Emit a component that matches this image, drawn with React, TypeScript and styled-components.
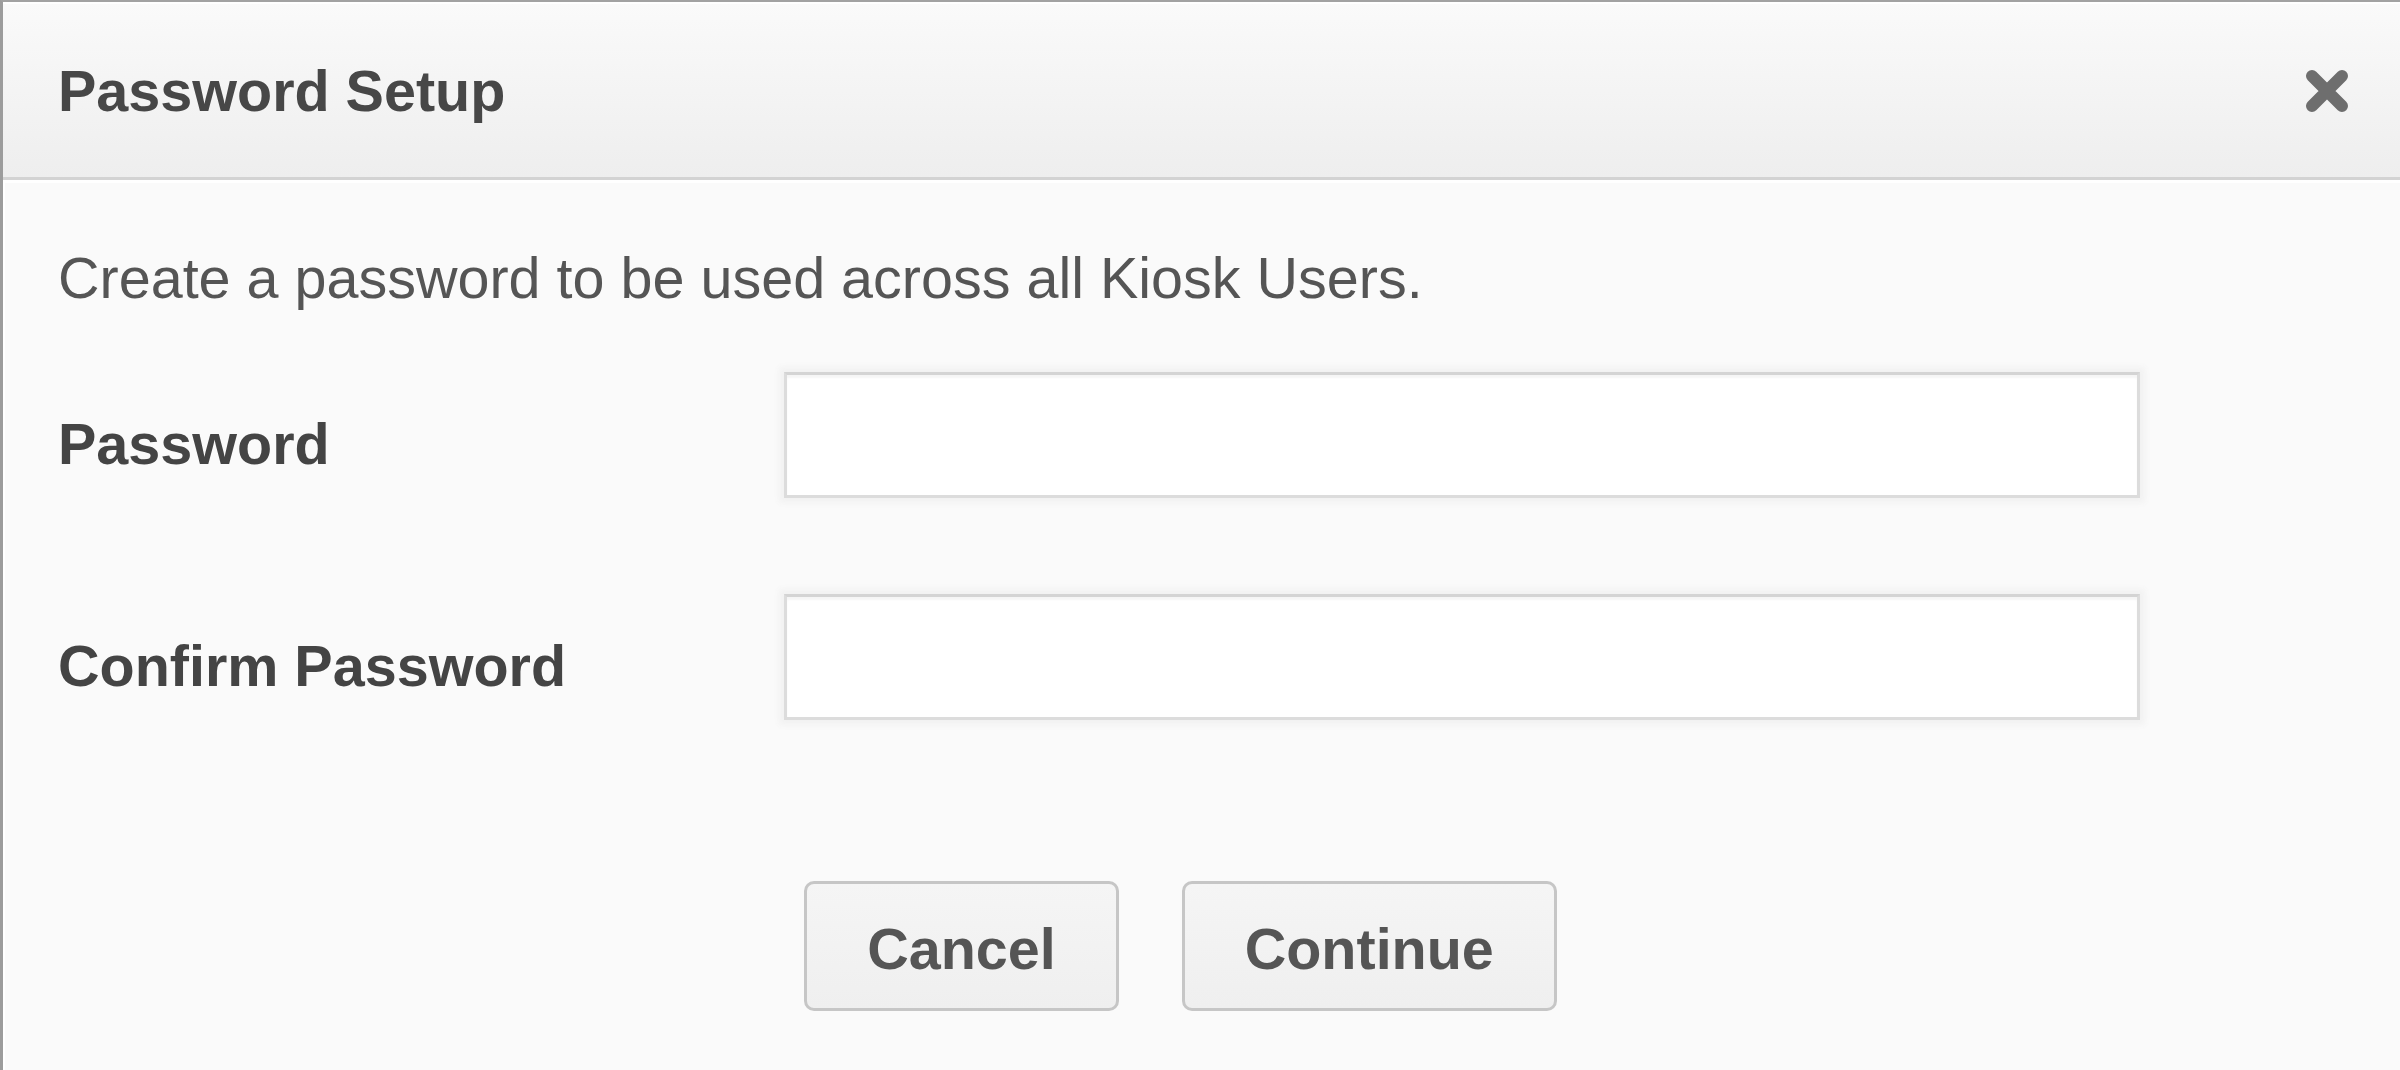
import styled, { createGlobalStyle } from "styled-components";

const GlobalStyle = createGlobalStyle`
  html, body {
    margin: 0;
    padding: 0;
    background: #fafafa;
  }
  body {
    font-family: "Liberation Sans", Arial, sans-serif;
  }
`;

const Dialog = styled.div`
  box-sizing: border-box;
  width: 2400px;
  height: 1070px;
  overflow: hidden;
  background: #fafafa;
  border-top: 2px solid #a2a2a2;
  border-left: 3px solid #9c9c9c;
  box-shadow: inset 2px 2px 0 #ffffff;
`;

const Header = styled.div`
  box-sizing: border-box;
  height: 178px;
  display: flex;
  align-items: center;
  justify-content: space-between;
  padding: 0 48px 0 55px;
  background: linear-gradient(#fafafa, #eeeeee);
  border-top: 2px solid #ffffff;
  border-bottom: 3px solid #d3d3d3;
  box-shadow: 0 3px 0 #ffffff;
`;

const Title = styled.h1`
  margin: 0;
  font-size: 57.5px;
  font-weight: bold;
  color: #474747;
`;

const CloseButton = styled.button`
  border: none;
  background: none;
  padding: 0;
  width: 50px;
  height: 50px;
  display: flex;
  align-items: center;
  justify-content: center;
  cursor: pointer;
`;

const Body = styled.div`
  padding: 65px 0 0 55px;
`;

const Description = styled.p`
  margin: 0 0 61px;
  font-size: 57.5px;
  color: #555555;
`;

const FormRow = styled.div`
  display: grid;
  grid-template-columns: 726px 1356px;
  align-items: center;
  margin-bottom: 96px;
`;

const Label = styled.label`
  padding-top: 18px;
  font-size: 57.5px;
  font-weight: bold;
  color: #444444;
`;

const Input = styled.input`
  box-sizing: border-box;
  width: 100%;
  height: 126px;
  border: 3px solid #dcdcdc;
  border-top-color: #d4d4d4;
  background: #ffffff;
  box-shadow: 0 0 6px 5px #f2f2f2, inset 0 3px 2px rgba(0, 0, 0, 0.04);
  outline: none;
`;

const Actions = styled.div`
  display: flex;
  justify-content: center;
  gap: 63px;
  padding: 65px 42px 0 0;
`;

const Button = styled.button`
  box-sizing: border-box;
  height: 130px;
  padding: 6px 60px 0;
  border: 3px solid #c6c6c6;
  border-radius: 10px;
  background: linear-gradient(#f5f5f5, #efefef);
  font-family: "Liberation Sans", Arial, sans-serif;
  font-size: 57.5px;
  font-weight: bold;
  color: #555555;
  cursor: pointer;
`;

const CloseIcon = () => (
  <svg width="48" height="48" viewBox="0 0 48 48">
    <path
      d="M9 9 L39 39 M39 9 L9 39"
      stroke="#6e6e6e"
      strokeWidth="12"
      strokeLinecap="round"
      fill="none"
    />
  </svg>
);

export default function App() {
  return (
    <>
      <GlobalStyle />
      <Dialog>
        <Header>
          <Title>Password Setup</Title>
          <CloseButton aria-label="Close">
            <CloseIcon />
          </CloseButton>
        </Header>
        <Body>
          <Description>Create a password to be used across all Kiosk Users.</Description>
          <FormRow>
            <Label htmlFor="password">Password</Label>
            <Input id="password" type="password" />
          </FormRow>
          <FormRow>
            <Label htmlFor="confirm">Confirm Password</Label>
            <Input id="confirm" type="password" />
          </FormRow>
        </Body>
        <Actions>
          <Button>Cancel</Button>
          <Button>Continue</Button>
        </Actions>
      </Dialog>
    </>
  );
}
